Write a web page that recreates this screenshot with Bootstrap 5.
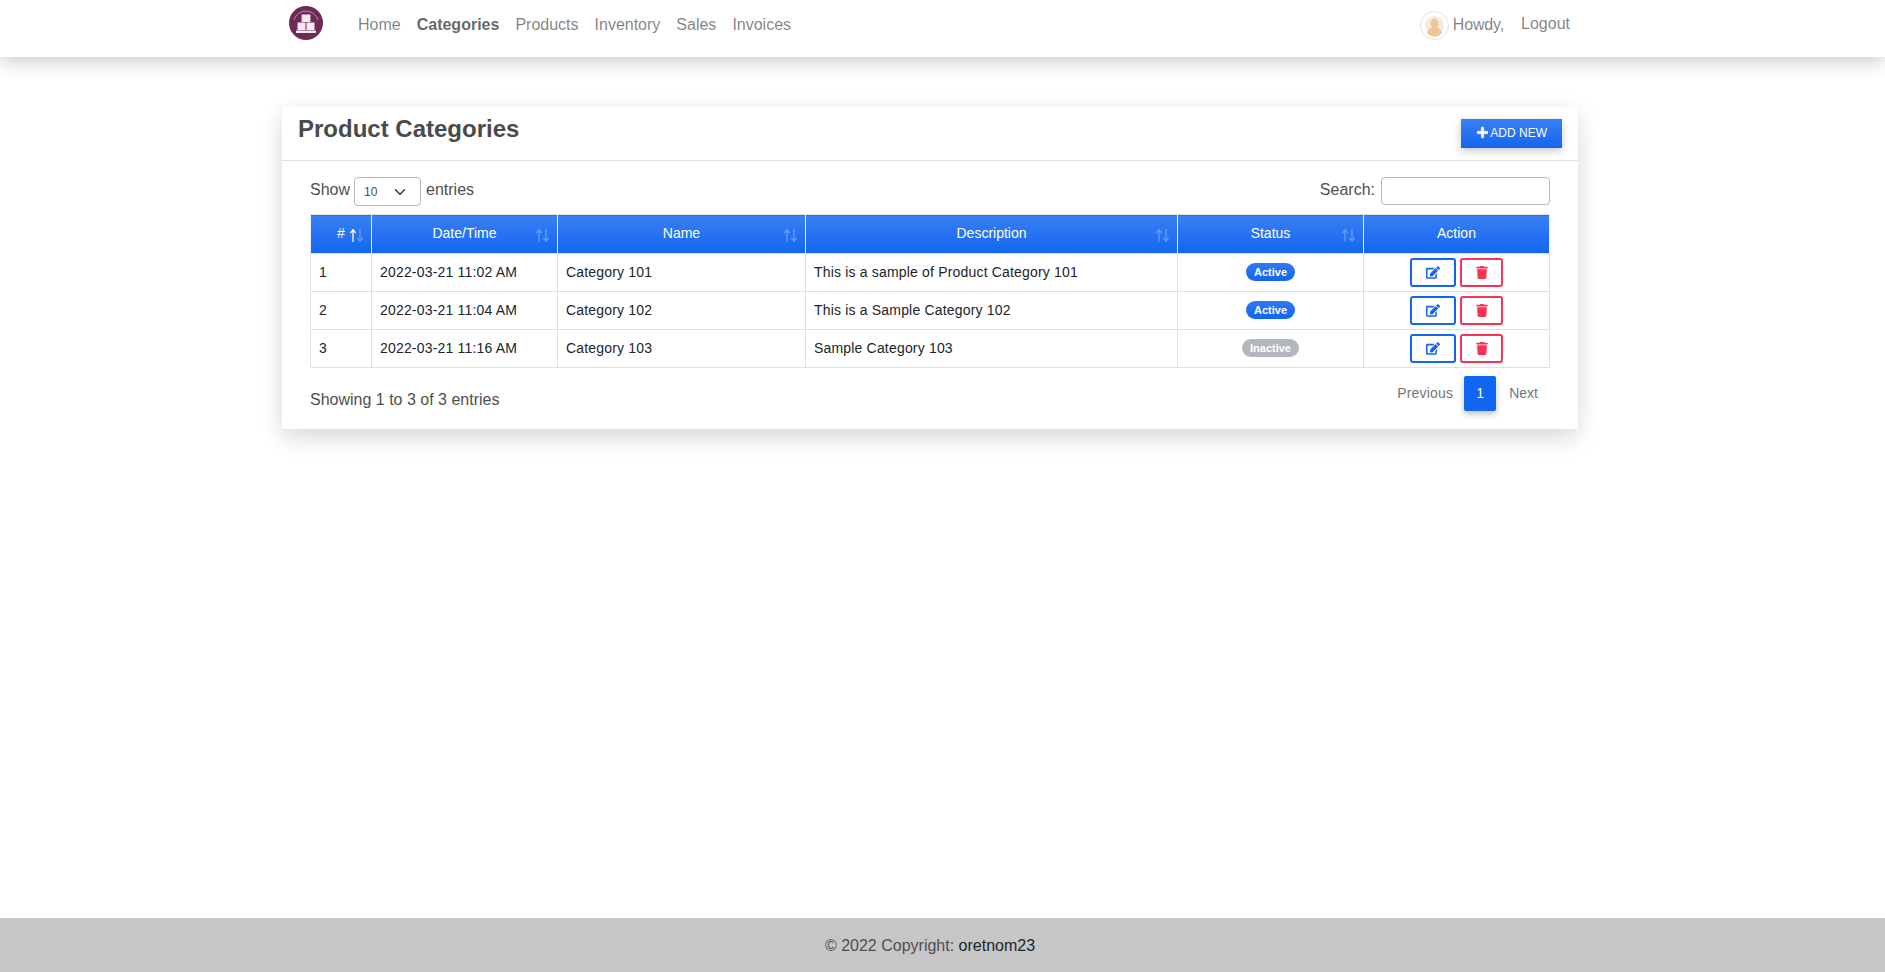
<!DOCTYPE html>
<html lang="en">
<head>
<meta charset="utf-8">
<title>Product Categories</title>
<link href="https://cdn.jsdelivr.net/npm/bootstrap@5.3.0/dist/css/bootstrap.min.css" rel="stylesheet">
<style>
body{font-family:"Liberation Sans",Arial,sans-serif;font-size:16px;color:#4f4f4f;background:#fff;min-height:972px}
.page-main{padding-right:25px;flex:1 0 auto}
.top-bar{height:57px;padding:0 25px 0 0;background:#fff;box-shadow:0 4px 18px rgba(0,0,0,.22);z-index:5}
.top-bar .container-xxl{padding:0 12px;height:57px;align-items:flex-start}
.brand-logo{display:block;width:34px;height:34px;margin:6px 0 0 7px}
.top-links{margin-left:27px;margin-top:13px}
.top-links .nav-link{padding:0 8px;line-height:24px;color:rgba(0,0,0,.5);font-size:16px}
.top-links .nav-link.active{color:rgba(0,0,0,.62);font-weight:700}
.top-user{margin-top:11px;margin-right:8px;color:rgba(0,0,0,.5)}
.avatar{display:block;width:29px;height:29px;margin-right:4px}
.howdy{line-height:24px;margin-top:2px;letter-spacing:-.15px}
.logout{margin-left:17px;line-height:24px;margin-top:1px;color:rgba(0,0,0,.5);text-decoration:none}
.panel{margin-top:50px;border:0;border-radius:0;box-shadow:0 8px 22px rgba(0,0,0,.16)}
.panel-head{height:54px;padding:7px 16px 0;background:#fff;border-bottom:1px solid #e0e0e0;border-radius:0!important}
.panel-title{font-size:24px;line-height:29px;font-weight:700;color:#4a4a4a;margin:0}
.add-btn{margin-top:5px;height:29px;padding:0 15px 0 16px;border:0;border-radius:0;font-size:12px;line-height:29px;color:#fff;text-transform:uppercase;background:linear-gradient(#3a7ff4,#1266f1);box-shadow:0 3px 8px rgba(0,0,0,.22)}
.add-btn svg{width:11px;height:13px;fill:#fff;stroke:#fff;stroke-width:24px;margin-right:2px;vertical-align:-2px}
.panel-body{padding:16px 28px 17px}
.dt-top{margin-bottom:8px;height:29px;line-height:24px}
.len-select{width:67px;height:29px;padding:0 0 0 9px;font-size:12px;color:#4f4f4f;border:1px solid #b8b8b8;border-radius:4px;margin:0 5px 0 4px;background-position:right 12px center;background-size:16px 12px}
.find-input{width:169px;height:28px;margin-left:6px;border:1px solid #b8b8b8;border-radius:4px;padding:0 6px}
.find-label{margin-bottom:0;display:flex;align-items:flex-start}
.dt-words{padding-top:1px}
.data-grid{table-layout:fixed;width:1240px;margin:0;font-size:14px;color:#212529;border-color:#e0e0e0}
.c1{width:61px}.c2{width:186px}.c3{width:248px}.c4{width:372px}.c5{width:186px}.c6{width:186px}
.data-grid thead th{position:relative;height:39px;padding:0 8px 2px;text-align:center;vertical-align:middle;font-weight:400;color:#fff;background:linear-gradient(#3a7ff4,#1266f1);border-color:#e8effc;line-height:35px}
.data-grid tbody td{height:38px;padding:0 8px 2px;vertical-align:middle;line-height:20px;letter-spacing:.18px;border-color:#e0e0e0;background:#fff;color:#212529;box-shadow:none}
.data-grid tbody td.act-cell{padding:0 8px;letter-spacing:0}
.sort-ic{position:absolute;top:14px;right:8px;width:13px;height:13px;fill:none;stroke:#fff;stroke-width:1.3;opacity:.3}
.sort-ic.on{opacity:1;stroke:none}
.sort-ic.on .up{stroke:#fff}
.sort-ic.on .down{stroke:rgba(255,255,255,.3)}
.pill{display:inline-block;height:18px;line-height:18px;padding:0 8px;border-radius:9px;font-size:11px;font-weight:700;color:#fff;vertical-align:middle;letter-spacing:0;margin-bottom:2px}
.pill-on{background:linear-gradient(#2f78f3,#1266f1)}
.pill-off{background:#b2b6bd}
.act{display:inline-flex;align-items:center;justify-content:center;height:29px;padding:0;background:#fff;border-width:2px;border-style:solid;border-radius:3px;vertical-align:middle}
.act svg{width:14px;height:13px}
.act-edit{width:46px;border-color:#1266f1;margin-right:4px}
.act-edit svg{fill:#1266f1}
.act-del{width:43px;border-color:#f93154}
.act-del svg{fill:#f93154;width:12px}
.dt-info{margin-top:12px;line-height:24px}
.dt-bottom{margin-top:8px}
.pager{margin:0;height:35px}
.pager .page-link{border:0;background:transparent;color:#757575;font-size:14px;line-height:35px;padding:0 12px;height:35px;letter-spacing:.2px}
.pager .page-item:last-child .page-link{padding-left:14px;letter-spacing:0}
.pager .active .page-link{background:#1266f1;color:#fff;padding:0 12px;width:32px;border-radius:2px;box-shadow:0 3px 7px rgba(0,0,0,.25);text-align:center}
.page-foot{height:54px;background:#c6c6c6;padding-right:25px;line-height:55px;text-align:center;flex:0 0 auto}
.page-foot a{color:#212529;text-decoration:none}
</style>
</head>
<body class="d-flex flex-column">
<nav class="navbar navbar-expand top-bar">
  <div class="container-xxl">
    <a class="navbar-brand p-0 m-0" href="#">
      <svg class="brand-logo" viewBox="0 0 34 34" role="img" aria-label="logo">
        <circle cx="17" cy="17" r="17" fill="#6e2a56"/>
        <path d="M5 14A12.500 12.500 0 0 1 29 14" fill="none" stroke="#b98aa8" stroke-width="1"/>
        <rect x="12.600" y="8.500" width="8.800" height="7.500" fill="#f3e9ef"/>
        <rect x="8.500" y="16.500" width="8" height="7.500" fill="#f3e9ef"/>
        <rect x="17.500" y="16.500" width="8" height="7.500" fill="#f3e9ef"/>
        <rect x="7" y="24.500" width="20" height="2.500" fill="#f3e9ef"/>
      </svg>
    </a>
    <ul class="navbar-nav top-links">
      <li class="nav-item"><a class="nav-link" href="#">Home</a></li>
      <li class="nav-item"><a class="nav-link active" href="#">Categories</a></li>
      <li class="nav-item"><a class="nav-link" href="#">Products</a></li>
      <li class="nav-item"><a class="nav-link" href="#">Inventory</a></li>
      <li class="nav-item"><a class="nav-link" href="#">Sales</a></li>
      <li class="nav-item"><a class="nav-link" href="#">Invoices</a></li>
    </ul>
    <div class="d-flex ms-auto top-user">
      <svg class="avatar" viewBox="0 0 29 29" role="img" aria-label="avatar">
        <circle cx="14.500" cy="14.500" r="14" fill="#fff" stroke="#e2e2e2"/>
        <circle cx="14.500" cy="14.500" r="9.500" fill="#f5ebdf"/>
        <ellipse cx="14.500" cy="12.500" rx="4" ry="5" fill="#efc595"/>
        <path d="M7 22c1-4 4-5 5.500-5.500h4c1.500.5 4.500 1.500 5.500 5.500a9.500 9.500 0 0 1-15 0z" fill="#efc595"/>
      </svg>
      <span class="howdy">Howdy,</span>
      <a class="logout" href="#">Logout</a>
    </div>
  </div>
</nav>
<main class="page-main">
  <div class="container-xxl">
    <div class="card panel">
      <div class="card-header panel-head d-flex justify-content-between align-items-start">
        <h3 class="panel-title">Product Categories</h3>
        <button type="button" class="btn add-btn"><svg viewBox="0 0 448 512"><path d="M416 208H272V64c0-17.670-14.330-32-32-32h-32c-17.670 0-32 14.330-32 32v144H32c-17.670 0-32 14.330-32 32v32c0 17.670 14.330 32 32 32h144v144c0 17.670 14.330 32 32 32h32c17.670 0 32-14.330 32-32V304h144c17.670 0 32-14.330 32-32v-32c0-17.670-14.330-32-32-32z"/></svg>Add New</button>
      </div>
      <div class="card-body panel-body">
        <div class="d-flex justify-content-between dt-top">
          <div class="d-flex align-items-start"><span class="dt-words">Show</span> <select class="form-select len-select" aria-label="entries"><option>10</option><option>25</option></select> <span class="dt-words">entries</span></div>
          <label class="find-label"><span class="dt-words">Search:</span><input type="search" class="form-control find-input"></label>
        </div>
        <table class="table table-bordered data-grid">
          <colgroup><col class="c1"><col class="c2"><col class="c3"><col class="c4"><col class="c5"><col class="c6"></colgroup>
          <thead>
            <tr>
              <th>#<svg class="sort-ic on" viewBox="0 0 13 13"><path class="up" d="M3 13V1M.4 4 3 .8 5.600 4"/><path class="down" d="M10 0v12M7.400 9 10 12.200 12.600 9"/></svg></th>
              <th>Date/Time<svg class="sort-ic" viewBox="0 0 13 13"><path d="M3 13V1M.4 4 3 .8 5.600 4M10 0v12M7.400 9 10 12.200 12.600 9"/></svg></th>
              <th>Name<svg class="sort-ic" viewBox="0 0 13 13"><path d="M3 13V1M.4 4 3 .8 5.600 4M10 0v12M7.400 9 10 12.200 12.600 9"/></svg></th>
              <th>Description<svg class="sort-ic" viewBox="0 0 13 13"><path d="M3 13V1M.4 4 3 .8 5.600 4M10 0v12M7.400 9 10 12.200 12.600 9"/></svg></th>
              <th>Status<svg class="sort-ic" viewBox="0 0 13 13"><path d="M3 13V1M.4 4 3 .8 5.600 4M10 0v12M7.400 9 10 12.200 12.600 9"/></svg></th>
              <th>Action</th>
            </tr>
          </thead>
          <tbody>
            <tr>
              <td>1</td><td>2022-03-21 11:02 AM</td><td>Category 101</td><td>This is a sample of Product Category 101</td>
              <td class="text-center act-cell"><span class="pill pill-on">Active</span></td>
              <td class="text-center act-cell"><button type="button" class="act act-edit" aria-label="Edit"><svg viewBox="0 0 576 512"><path d="M402.600 83.200l90.200 90.200c3.800 3.800 3.800 10 0 13.800L274.400 405.600l-92.800 10.300c-12.400 1.400-22.900-9.100-21.500-21.500l10.300-92.800L388.800 83.200c3.800-3.800 10-3.800 13.800 0zm162-22.900l-48.800-48.800c-15.200-15.200-39.900-15.200-55.200 0l-35.400 35.400c-3.800 3.800-3.800 10 0 13.800l90.200 90.200c3.800 3.800 10 3.800 13.800 0l35.400-35.400c15.200-15.300 15.200-40 0-55.200zM384 346.200V448H64V128h229.800c3.200 0 6.200-1.300 8.500-3.500l40-40c7.600-7.600 2.200-20.500-8.500-20.500H48C21.500 64 0 85.500 0 112v352c0 26.500 21.500 48 48 48h352c26.500 0 48-21.500 48-48V306.200c0-10.700-12.900-16-20.500-8.500l-40 40c-2.200 2.300-3.500 5.300-3.500 8.500z"/></svg></button><button type="button" class="act act-del" aria-label="Delete"><svg viewBox="0 0 448 512"><path d="M432 32H312l-9.400-18.700A24 24 0 0 0 281.100 0H166.800a23.720 23.720 0 0 0-21.400 13.300L136 32H16A16 16 0 0 0 0 48v32a16 16 0 0 0 16 16h416a16 16 0 0 0 16-16V48a16 16 0 0 0-16-16zM53.200 467a48 48 0 0 0 47.900 45h245.800a48 48 0 0 0 47.900-45L416 128H32z"/></svg></button></td>
            </tr>
            <tr>
              <td>2</td><td>2022-03-21 11:04 AM</td><td>Category 102</td><td>This is a Sample Category 102</td>
              <td class="text-center act-cell"><span class="pill pill-on">Active</span></td>
              <td class="text-center act-cell"><button type="button" class="act act-edit" aria-label="Edit"><svg viewBox="0 0 576 512"><path d="M402.600 83.200l90.200 90.200c3.800 3.800 3.800 10 0 13.800L274.400 405.600l-92.800 10.300c-12.400 1.400-22.900-9.100-21.500-21.500l10.300-92.800L388.800 83.200c3.800-3.800 10-3.800 13.800 0zm162-22.900l-48.800-48.800c-15.200-15.200-39.900-15.200-55.200 0l-35.400 35.400c-3.800 3.800-3.800 10 0 13.800l90.200 90.200c3.800 3.800 10 3.800 13.800 0l35.400-35.400c15.200-15.300 15.200-40 0-55.200zM384 346.200V448H64V128h229.800c3.200 0 6.200-1.300 8.500-3.500l40-40c7.600-7.600 2.200-20.500-8.500-20.500H48C21.500 64 0 85.500 0 112v352c0 26.500 21.500 48 48 48h352c26.500 0 48-21.500 48-48V306.200c0-10.700-12.900-16-20.500-8.500l-40 40c-2.200 2.300-3.500 5.300-3.500 8.500z"/></svg></button><button type="button" class="act act-del" aria-label="Delete"><svg viewBox="0 0 448 512"><path d="M432 32H312l-9.400-18.700A24 24 0 0 0 281.100 0H166.800a23.720 23.720 0 0 0-21.400 13.300L136 32H16A16 16 0 0 0 0 48v32a16 16 0 0 0 16 16h416a16 16 0 0 0 16-16V48a16 16 0 0 0-16-16zM53.200 467a48 48 0 0 0 47.900 45h245.800a48 48 0 0 0 47.900-45L416 128H32z"/></svg></button></td>
            </tr>
            <tr>
              <td>3</td><td>2022-03-21 11:16 AM</td><td>Category 103</td><td>Sample Category 103</td>
              <td class="text-center act-cell"><span class="pill pill-off">Inactive</span></td>
              <td class="text-center act-cell"><button type="button" class="act act-edit" aria-label="Edit"><svg viewBox="0 0 576 512"><path d="M402.600 83.200l90.200 90.200c3.800 3.800 3.800 10 0 13.800L274.400 405.600l-92.800 10.300c-12.400 1.400-22.900-9.100-21.500-21.500l10.300-92.800L388.800 83.200c3.800-3.800 10-3.800 13.800 0zm162-22.900l-48.800-48.800c-15.200-15.200-39.900-15.200-55.200 0l-35.400 35.400c-3.800 3.800-3.800 10 0 13.800l90.200 90.200c3.800 3.800 10 3.800 13.800 0l35.400-35.400c15.200-15.300 15.200-40 0-55.200zM384 346.200V448H64V128h229.800c3.200 0 6.200-1.300 8.500-3.500l40-40c7.600-7.600 2.200-20.500-8.500-20.500H48C21.500 64 0 85.500 0 112v352c0 26.500 21.500 48 48 48h352c26.500 0 48-21.500 48-48V306.200c0-10.700-12.900-16-20.500-8.500l-40 40c-2.200 2.300-3.500 5.300-3.500 8.500z"/></svg></button><button type="button" class="act act-del" aria-label="Delete"><svg viewBox="0 0 448 512"><path d="M432 32H312l-9.400-18.700A24 24 0 0 0 281.100 0H166.800a23.720 23.720 0 0 0-21.400 13.300L136 32H16A16 16 0 0 0 0 48v32a16 16 0 0 0 16 16h416a16 16 0 0 0 16-16V48a16 16 0 0 0-16-16zM53.200 467a48 48 0 0 0 47.900 45h245.800a48 48 0 0 0 47.900-45L416 128H32z"/></svg></button></td>
            </tr>
          </tbody>
        </table>
        <div class="d-flex justify-content-between align-items-start dt-bottom">
          <div class="dt-info">Showing 1 to 3 of 3 entries</div>
          <nav aria-label="pages">
            <ul class="pagination pager">
              <li class="page-item"><a class="page-link" href="#">Previous</a></li>
              <li class="page-item active"><a class="page-link" href="#">1</a></li>
              <li class="page-item"><a class="page-link" href="#">Next</a></li>
            </ul>
          </nav>
        </div>
      </div>
    </div>
  </div>
</main>
<footer class="page-foot">© 2022 Copyright: <a href="#">oretnom23</a></footer>
<script src="https://cdn.jsdelivr.net/npm/bootstrap@5.3.0/dist/js/bootstrap.bundle.min.js"></script>
</body>
</html>
